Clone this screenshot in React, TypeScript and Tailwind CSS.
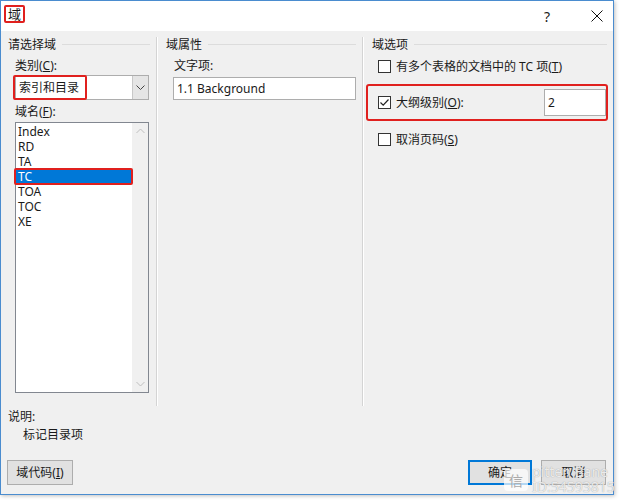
import React from "react";

const font = "font-['Noto_Sans','Noto_Sans_CJK_SC',sans-serif]";

function Check({ checked }: { checked?: boolean }) {
  return (
    <div className="w-[13px] h-[13px] border border-[#333] bg-white flex items-center justify-center shrink-0">
      {checked && (
        <svg width="11" height="11" viewBox="0 0 11 11">
          <path d="M1.5 5.5 L4.2 8.2 L9.5 2.5" stroke="#222" strokeWidth="1.2" fill="none" />
        </svg>
      )}
    </div>
  );
}

function GroupHead({ text, pl }: { text: string; pl: string }) {
  return (
    <div className={`flex items-center gap-[6px] ${pl} pr-[6px] h-[15px]`}>
      <span className="text-[#1a1a1a] leading-[15px]">{text}</span>
      <div className="flex-1 h-px bg-[#dcdcdc]" />
    </div>
  );
}

export default function App() {
  const items = ["Index", "RD", "TA", "TC", "TOA", "TOC", "XE"];
  return (
    <div className={`w-[619px] h-[500px] bg-white relative overflow-hidden ${font} text-[12px] text-[#1a1a1a]`}>
      <div className="w-[614px] h-[495px] border border-[#4a8ccf] flex flex-col bg-[#f0f0f0] shadow-[1px_1px_4px_rgba(0,0,0,0.25)]">
        {/* title bar */}
        <div className="h-[30px] bg-white flex items-center shrink-0">
          <div className="ml-[3px] mt-[-4px] border-2 border-[#e0201e] rounded-[2px] w-[21px] h-[18px] flex items-center justify-center text-[13px] leading-none">
            域
          </div>
          <div className="flex-1" />
          <div className="w-[20px] text-center text-[14px] mr-[34px]">?</div>
          <svg width="12" height="12" viewBox="0 0 12 12" className="mr-[10px]">
            <path d="M0.5 0.5 L11.5 11.5 M11.5 0.5 L0.5 11.5" stroke="#111" strokeWidth="1" />
          </svg>
        </div>

        {/* body */}
        <div className="flex-1 flex flex-col">
          <div className="flex h-[375px]">
            {/* left column */}
            <div className="w-[155px] flex flex-col pt-[6px]">
              <GroupHead text="请选择域" pl="pl-[7px]" />
              <div className="pl-[14px] mt-[6px] leading-[15px]">
                类别(<span className="underline">C</span>):
              </div>
              <div className="ml-[14px] mt-[2px] w-[134px] h-[25px] bg-white border border-[#adadad] flex relative">
                <div className="absolute left-[-3px] top-[-1px] w-[74px] h-[25px] border-2 border-[#e0201e] rounded-[2px]" />
                <div className="flex-1 flex items-center pl-[3px] text-[12px]">索引和目录</div>
                <div className="w-[16px] bg-[#e5e5e5] border-l border-[#c8c8c8] flex items-center justify-center">
                  <svg width="9" height="6" viewBox="0 0 9 6">
                    <path d="M0.5 0.5 L4.5 4.5 L8.5 0.5" stroke="#444" fill="none" />
                  </svg>
                </div>
              </div>
              <div className="pl-[14px] mt-[4px] leading-[15px]">
                域名(<span className="underline">F</span>):
              </div>
              <div className="ml-[14px] mt-[3px] w-[134px] h-[271px] bg-white border border-[#828790] flex relative">
                <div className="flex-1 flex flex-col pt-[1px]">
                  {items.map((it) => (
                    <div
                      key={it}
                      className={`h-[15px] leading-[15px] pl-[2px] ${it === "TC" ? "bg-[#0078d7] text-white" : ""}`}
                    >
                      {it}
                    </div>
                  ))}
                </div>
                <div className="absolute left-[-2px] top-[45px] w-[119px] h-[17px] border-2 border-[#e0201e] rounded-[2px]" />
                <div className="w-[16px] bg-[#f0f0f0] flex flex-col justify-between items-center py-[5px]">
                  <svg width="9" height="6" viewBox="0 0 9 6">
                    <path d="M0.5 5 L4.5 1 L8.5 5" stroke="#bfbfbf" fill="none" />
                  </svg>
                  <svg width="9" height="6" viewBox="0 0 9 6">
                    <path d="M0.5 1 L4.5 5 L8.5 1" stroke="#bfbfbf" fill="none" />
                  </svg>
                </div>
              </div>
            </div>
            <div className="w-px bg-[#d4d4d4] mt-[6px] border-r border-white box-content" />
            {/* middle column */}
            <div className="w-[204px] flex flex-col pt-[6px]">
              <GroupHead text="域属性" pl="pl-[8px]" />
              <div className="pl-[16px] mt-[6px] leading-[15px]">文字项:</div>
              <div className="ml-[15px] mt-[4px] w-[183px] h-[23px] bg-white border border-[#adadad] flex items-center pl-[3px]">
                1.1 Background
              </div>
            </div>
            <div className="w-px bg-[#d4d4d4] mt-[6px] border-r border-white box-content" />
            {/* right column */}
            <div className="flex-1 flex flex-col pt-[6px]">
              <GroupHead text="域选项" pl="pl-[8px]" />
              <div className="flex items-center gap-[5px] pl-[14px] mt-[7px] h-[15px]">
                <Check />
                <span>
                  有多个表格的文档中的 TC 项(<span className="underline">T</span>)
                </span>
              </div>
              <div className="ml-[2px] mt-[10px] w-[242px] h-[37px] border-2 border-[#e0201e] rounded-[3px] flex items-center pl-[10px]">
                <Check checked />
                <span className="ml-[5px]">
                  大纲级别(<span className="underline">O</span>):
                </span>
                <div className="flex-1" />
                <div className="w-[62px] h-[27px] bg-white border border-[#adadad] flex items-center pl-[3px]">
                  2
                </div>
              </div>
              <div className="flex items-center gap-[5px] pl-[14px] mt-[11px] h-[15px]">
                <Check />
                <span>
                  取消页码(<span className="underline">S</span>)
                </span>
              </div>
            </div>
          </div>

          {/* description */}
          <div className="pl-[7px] mt-[3px] leading-[15px]">说明:</div>
          <div className="pl-[22px] mt-[3px] leading-[15px]">标记目录项</div>

          {/* buttons */}
          <div className="flex items-center mt-[18px] pl-[6px] pr-[7px]">
            <div className="w-[66px] h-[25px] bg-[#e1e1e1] border border-[#adadad] flex items-center justify-center">
              域代码(<span className="underline">I</span>)
            </div>
            <div className="flex-1" />
            <div className="w-[64px] h-[25px] bg-[#e1e1e1] border-2 border-[#0078d7] flex items-center justify-center">
              确定
            </div>
            <div className="w-[65px] h-[25px] ml-[9px] bg-[#e1e1e1] border border-[#adadad] flex items-center justify-center">
              取消
            </div>
          </div>
        </div>
      </div>

      {/* watermark overlay */}
      <div className="absolute left-[504px] top-[469px] w-[24px] h-[22px] rounded-[4px] bg-white/70 flex items-center justify-center text-[14px] text-[#aaa]">
        信
      </div>
      <div className="absolute left-[532px] top-[464px] text-[14px] leading-[15px] text-white/80 [text-shadow:0_0_1px_#888]">
        pitten Bane
      </div>
      <div className="absolute left-[532px] top-[479px] text-[14px] leading-[15px] text-white/80 [text-shadow:0_0_1px_#888]">
        ID:54593815
      </div>
    </div>
  );
}
